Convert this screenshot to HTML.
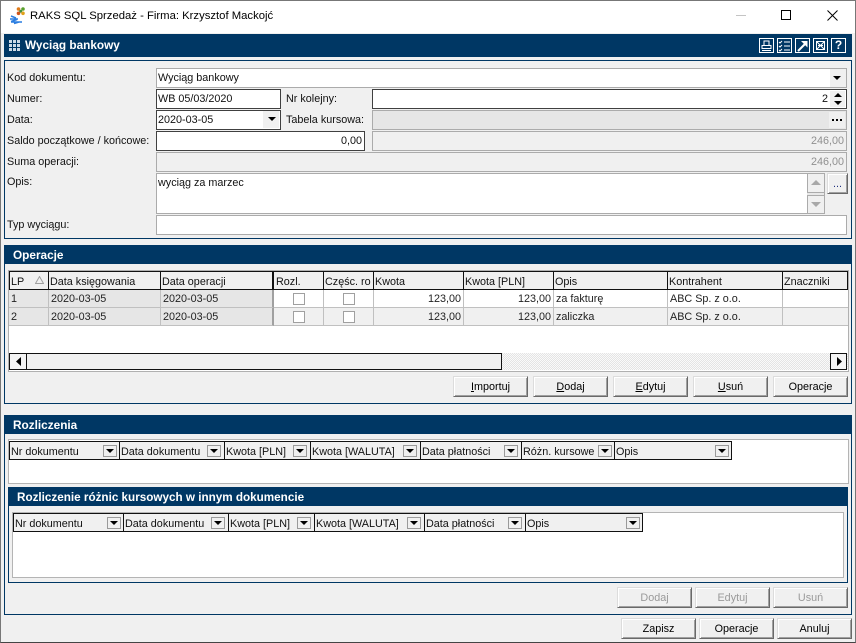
<!DOCTYPE html>
<html><head><meta charset="utf-8"><style>
html,body{margin:0;padding:0;width:856px;height:643px;overflow:hidden;background:#f0f0f0}
body{position:relative;font:10.8px/14px "Liberation Sans",sans-serif;color:#111}
div,span.a,svg{position:absolute;box-sizing:border-box}
.l{height:14px;white-space:nowrap;left:7px}
.bar{background:#003764;color:#fff;font-weight:bold;font-size:11.8px;line-height:21px;padding-left:9px;overflow:hidden}
.pan{border:1px solid #003764}
.i{border:1px solid #ababab;background:#fff;padding-left:1px;line-height:19px;white-space:nowrap}
.d{border-color:#404040}
.g{background:#e6e6e6}
.g2{background:#f0f0f0;text-align:right;padding-right:2px;color:#909090}
.h{background:#f0f0f0;border:1px solid #111;border-left:0;height:19px;line-height:20px;padding-left:1px;white-space:nowrap;overflow:hidden}
.c{height:18px;line-height:18px;border-right:1px solid #c0c0c0;border-bottom:1px solid #c0c0c0;padding-left:2px;white-space:nowrap;color:#222}
.r{text-align:right;padding-right:2px;padding-left:0}
.cb{width:12px;height:12px;border:1px solid #a0a0a0;background:#fff;top:3px}
.b{width:75px;height:21px;background:#f0f0f0;border:1px solid;border-color:#dcdcdc #696969 #696969 #dcdcdc;box-shadow:inset 1px 1px #fff,inset -1px -1px #a0a0a0;text-align:center;line-height:21px;color:#000}
.x{color:#9a9a9a}
.t{width:0;height:0;border-left:4px solid transparent;border-right:4px solid transparent;border-top:4px solid #000}
.fb{width:14px;height:12px;top:3px;background:#f0f0f0;border:1px solid #9a9a9a}
.fb .t{left:2px;top:3px}
</style></head><body>
<div style="left:0;top:0;width:856px;height:643px;border:1px solid #777;border-bottom-color:#444;z-index:9"></div>
<div style="left:1px;top:1px;width:854px;height:32px;background:#fff"></div>
<svg style="left:9px;top:6px" width="20" height="20" viewBox="0 0 20 20"><circle cx="9.500" cy="3" r="1.800" fill="#e07b1a"/><circle cx="14" cy="3" r="1.800" fill="#58a02c"/><circle cx="11.700" cy="5.200" r="1.500" fill="#3f9040"/><circle cx="9.500" cy="7.300" r="1.800" fill="#d0541a"/><circle cx="14" cy="7.300" r="1.800" fill="#e0a01a"/><path d="M2 10L7 12M1 13H9M2 15.500L8 13.500M2 16H13M5 17.500L10 16" stroke="#2a7de0" stroke-width="1.500" fill="none"/></svg>
<div style="left:30px;top:9px;font-size:11.3px;line-height:15px;white-space:nowrap;color:#000">RAKS SQL Sprzedaż - Firma: Krzysztof Mackojć</div>
<div style="left:736px;top:15px;width:10px;height:1px;background:#c4c4c4"></div>
<div style="left:781px;top:10px;width:10px;height:10px;border:1px solid #000"></div>
<svg style="left:827px;top:10px" width="11" height="11"><path d="M.5 .5L10.5 10.5M10.5 .5L.5 10.5" stroke="#000" stroke-width="1"/></svg>

<div class="bar" style="left:4px;top:34px;width:848px;height:23px;padding-left:21px;line-height:23px">Wyciąg bankowy</div>
<svg style="left:9px;top:40px" width="11" height="11" fill="#cfdbe6"><rect width="3" height="3"/><rect x="4" width="3" height="3"/><rect x="8" width="3" height="3"/><rect y="4" width="3" height="3"/><rect x="4" y="4" width="3" height="3"/><rect x="8" y="4" width="3" height="3"/><rect y="8" width="3" height="3"/><rect x="4" y="8" width="3" height="3"/><rect x="8" y="8" width="3" height="3"/></svg>
<svg style="left:759px;top:38px" width="88" height="15" fill="none" stroke="#fff">
<rect x=".5" y=".5" width="14" height="14"/><path d="M5 7V3H10V7M3 7.5H12V10.5H3ZM3 12.5H12"/>
<rect x="18.5" y=".5" width="14" height="14"/><path d="M20 4L21 5L23 3M20 8L21 9L23 7M20 12L21 13L23 11M25 4H31M25 8H31M25 12H31"/>
<rect x="36.500" y=".5" width="14" height="14"/><path d="M39 13L47 5" stroke-width="2"/><path d="M42 3H48.500V9.500Z" fill="#fff" stroke="none"/>
<rect x="54.500" y=".5" width="14" height="14"/><rect x="57.500" y="3.500" width="8" height="8"/><path d="M58 4L65 11M65 4L58 11M59 7.500H64"/>
<rect x="72.500" y=".5" width="14" height="14"/></svg>
<div style="left:831px;top:38px;width:15px;height:15px;color:#fff;font-weight:bold;font-size:12px;text-align:center;line-height:15px">?</div>

<div class="pan" style="left:4px;top:60px;width:848px;height:179px"></div>
<div class="l" style="top:71px">Kod dokumentu:</div>
<div class="l" style="top:92px">Numer:</div>
<div class="l" style="top:113px">Data:</div>
<div class="l" style="top:134px">Saldo początkowe / końcowe:</div>
<div class="l" style="top:155px">Suma operacji:</div>
<div class="l" style="top:175px">Opis:</div>
<div class="l" style="top:218px">Typ wyciągu:</div>
<div class="l" style="left:286px;top:92px">Nr kolejny:</div>
<div class="l" style="left:286px;top:113px">Tabela kursowa:</div>

<div class="i" style="left:156px;top:68px;width:691px;height:20px">Wyciąg bankowy<div style="right:0;top:0;width:16px;height:18px;background:#f0f0f0"></div><div class="t" style="right:5px;top:7px"></div></div>
<div class="i d" style="left:156px;top:89px;width:125px;height:20px">WB 05/03/2020</div>
<div class="i d" style="left:156px;top:110px;width:125px;height:20px">2020-03-05<div style="right:1px;top:0;width:16px;height:17px;background:#f0f0f0"></div><div class="t" style="right:4px;top:6px"></div></div>
<div class="i d" style="left:372px;top:89px;width:475px;height:20px;text-align:right;padding-right:18px">2<div style="right:1px;top:1px;width:15px;height:16px;background:#f0f0f0"></div><div class="t" style="right:4px;top:3px;border-top:0;border-bottom:4px solid #000"></div><div class="t" style="right:4px;top:11px"></div></div>
<div class="i g" style="left:372px;top:110px;width:475px;height:20px"><div style="right:1px;top:1px;width:16px;height:16px;background:#f0f0f0"></div><div style="right:3px;top:8px;width:11px;height:2px;background-image:linear-gradient(90deg,#000 2px,transparent 2px);background-size:4px 2px"></div></div>
<div class="i d" style="left:156px;top:131px;width:209px;height:20px;text-align:right;padding-right:2px">0,00</div>
<div class="i g2" style="left:372px;top:131px;width:475px;height:20px">246,00</div>
<div class="i g2" style="left:156px;top:152px;width:691px;height:20px">246,00</div>
<div class="i" style="left:156px;top:173px;width:669px;height:41px">wyciąg za marzec</div>
<div style="left:807px;top:174px;width:17px;height:39px;background:#e8e8e8"></div>
<div style="left:807px;top:173px;width:18px;height:20px;background:#f0f0f0;border:1px solid #ababab"><div class="t" style="left:3px;top:6px;border-left-width:5px;border-right-width:5px;border-top:0;border-bottom:5px solid #a8a8a8"></div></div>
<div style="left:807px;top:195px;width:18px;height:19px;background:#f0f0f0;border:1px solid #ababab"><div class="t" style="left:3px;top:6px;border-left-width:5px;border-right-width:5px;border-top:5px solid #a8a8a8"></div></div>
<div class="b" style="left:827px;top:173px;width:21px;height:21px;line-height:20px;color:#203080">...</div>
<div class="i" style="left:156px;top:215px;width:691px;height:20px"></div>

<div class="pan" style="left:4px;top:245px;width:848px;height:159px"></div>
<div class="bar" style="left:4px;top:245px;width:848px;height:19px">Operacje</div>
<div style="left:8px;top:270px;width:841px;height:102px;background:#fff;border:1px solid #b0b0b0"></div>
<div class="h" style="left:9px;top:271px;width:40px;border-left:1px solid #111;padding-left:1px">LP<svg style="left:25px;top:4px" width="9" height="8"><path d="M4.500 .5L8.500 7.500H.5Z" fill="none" stroke="#a0a0a0"/></svg></div>
<div class="h" style="left:49px;top:271px;width:112px">Data księgowania</div>
<div class="h" style="left:161px;top:271px;width:113px;border-right-width:2px">Data operacji</div>
<div class="h" style="left:274px;top:271px;width:50px;padding-left:2px">Rozl.</div>
<div class="h" style="left:324px;top:271px;width:50px">Częśc. ro</div>
<div class="h" style="left:374px;top:271px;width:90px">Kwota</div>
<div class="h" style="left:464px;top:271px;width:90px">Kwota [PLN]</div>
<div class="h" style="left:554px;top:271px;width:114px">Opis</div>
<div class="h" style="left:668px;top:271px;width:115px">Kontrahent</div>
<div class="h" style="left:783px;top:271px;width:65px">Znaczniki</div>

<div class="c g" style="left:9px;top:290px;width:40px">1</div>
<div class="c g" style="left:49px;top:290px;width:112px">2020-03-05</div>
<div class="c g" style="left:161px;top:290px;width:113px;border-right:2px solid #a0a0a0">2020-03-05</div>
<div class="c" style="left:274px;top:290px;width:50px;background:#fff"><div class="cb" style="left:19px"></div></div>
<div class="c" style="left:324px;top:290px;width:50px;background:#fff"><div class="cb" style="left:19px"></div></div>
<div class="c r" style="left:374px;top:290px;width:90px;background:#fff">123,00</div>
<div class="c r" style="left:464px;top:290px;width:90px;background:#fff">123,00</div>
<div class="c" style="left:554px;top:290px;width:114px;background:#fff">za fakturę</div>
<div class="c" style="left:668px;top:290px;width:115px;background:#fff">ABC Sp. z o.o.</div>
<div class="c" style="left:783px;top:290px;width:65px;background:#fff;border-right:0"></div>

<div class="c g" style="left:9px;top:308px;width:40px">2</div>
<div class="c g" style="left:49px;top:308px;width:112px">2020-03-05</div>
<div class="c g" style="left:161px;top:308px;width:113px;border-right:2px solid #a0a0a0">2020-03-05</div>
<div class="c" style="left:274px;top:308px;width:50px;background:#f0f0f0"><div class="cb" style="left:19px"></div></div>
<div class="c" style="left:324px;top:308px;width:50px;background:#f0f0f0"><div class="cb" style="left:19px"></div></div>
<div class="c r" style="left:374px;top:308px;width:90px;background:#f0f0f0">123,00</div>
<div class="c r" style="left:464px;top:308px;width:90px;background:#f0f0f0">123,00</div>
<div class="c" style="left:554px;top:308px;width:114px;background:#f0f0f0">zaliczka</div>
<div class="c" style="left:668px;top:308px;width:115px;background:#f0f0f0">ABC Sp. z o.o.</div>
<div class="c" style="left:783px;top:308px;width:65px;background:#f0f0f0;border-right:0"></div>

<div style="left:9px;top:353px;width:839px;height:17px;background:#f4f4f4;background-image:repeating-conic-gradient(#e4e4e4 0 25%,#fafafa 0 50%);background-size:2px 2px"></div>
<div style="left:9px;top:353px;width:18px;height:17px;background:#f4f4f4;border:1px solid #111"><svg style="left:6px;top:3px" width="5" height="9"><path d="M5 0V9L0 4.500Z"/></svg></div>
<div style="left:26px;top:353px;width:476px;height:17px;background:#f0f0f0;border:1px solid #111"></div>
<div style="left:830px;top:353px;width:17px;height:17px;background:#f4f4f4;border:1px solid #111"><svg style="left:6px;top:3px" width="5" height="9"><path d="M0 0V9L5 4.500Z"/></svg></div>

<div class="b" style="left:453px;top:376px"><u>I</u>mportuj</div>
<div class="b" style="left:533px;top:376px"><u>D</u>odaj</div>
<div class="b" style="left:613px;top:376px"><u>E</u>dytuj</div>
<div class="b" style="left:693px;top:376px"><u>U</u>suń</div>
<div class="b" style="left:773px;top:376px">Operacje</div>

<div class="pan" style="left:4px;top:415px;width:848px;height:200px"></div>
<div class="bar" style="left:4px;top:415px;width:848px;height:19px">Rozliczenia</div>
<div style="left:8px;top:439px;width:841px;height:45px;background:#fff;border:1px solid #b4b4b4"></div>
<div class="h" style="left:9px;top:441px;width:111px;border-left:1px solid #111">Nr dokumentu<div class="fb" style="left:93px"><div class="t"></div></div></div>
<div class="h" style="left:120px;top:441px;width:105px">Data dokumentu<div class="fb" style="left:87px"><div class="t"></div></div></div>
<div class="h" style="left:225px;top:441px;width:86px">Kwota [PLN]<div class="fb" style="left:68px"><div class="t"></div></div></div>
<div class="h" style="left:311px;top:441px;width:110px">Kwota [WALUTA]<div class="fb" style="left:92px"><div class="t"></div></div></div>
<div class="h" style="left:421px;top:441px;width:101px">Data płatności<div class="fb" style="left:83px"><div class="t"></div></div></div>
<div class="h" style="left:522px;top:441px;width:93px">Różn. kursowe<div class="fb" style="left:76px"><div class="t"></div></div></div>
<div class="h" style="left:615px;top:441px;width:117px">Opis<div class="fb" style="left:100px"><div class="t"></div></div></div>

<div class="pan" style="left:8px;top:487px;width:840px;height:96px"></div>
<div class="bar" style="left:8px;top:487px;width:840px;height:19px;font-size:11.7px">Rozliczenie różnic kursowych w innym dokumencie</div>
<div style="left:12px;top:512px;width:832px;height:66px;background:#fff;border:1px solid #b4b4b4"></div>
<div class="h" style="left:13px;top:513px;width:111px;border-left:1px solid #111">Nr dokumentu<div class="fb" style="left:93px"><div class="t"></div></div></div>
<div class="h" style="left:124px;top:513px;width:105px">Data dokumentu<div class="fb" style="left:87px"><div class="t"></div></div></div>
<div class="h" style="left:229px;top:513px;width:86px">Kwota [PLN]<div class="fb" style="left:68px"><div class="t"></div></div></div>
<div class="h" style="left:315px;top:513px;width:110px">Kwota [WALUTA]<div class="fb" style="left:92px"><div class="t"></div></div></div>
<div class="h" style="left:425px;top:513px;width:101px">Data płatności<div class="fb" style="left:83px"><div class="t"></div></div></div>
<div class="h" style="left:526px;top:513px;width:117px">Opis<div class="fb" style="left:100px"><div class="t"></div></div></div>

<div class="b x" style="left:617px;top:587px">Dodaj</div>
<div class="b x" style="left:695px;top:587px">Edytuj</div>
<div class="b x" style="left:773px;top:587px">Usuń</div>
<div class="b" style="left:621px;top:618px">Zapisz</div>
<div class="b" style="left:699px;top:618px">Operacje</div>
<div class="b" style="left:777px;top:618px">Anuluj</div>
</body></html>
